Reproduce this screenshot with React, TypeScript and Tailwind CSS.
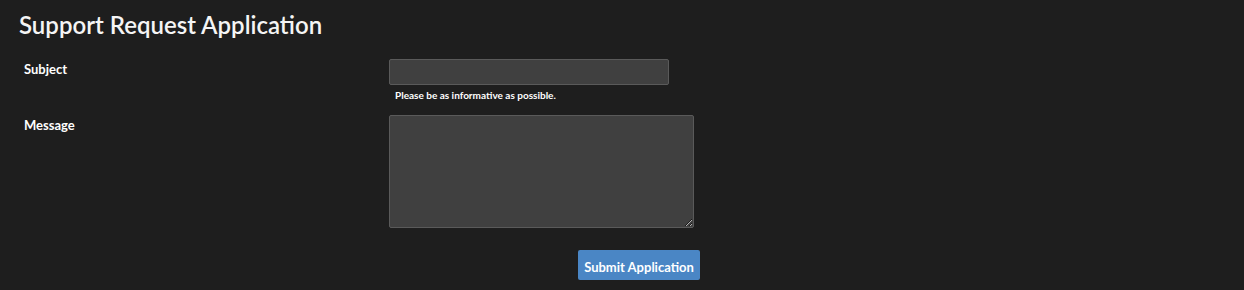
import React from "react";

export default function App() {
  return (
    <div className="w-[1244px] h-[290px] bg-[#1e1e1e] text-white overflow-hidden" style={{ fontFamily: "Lato, 'Open Sans', sans-serif" }}>
      <div className="pl-[19px] pt-[9px]">
        <h1 className="text-[24px] leading-[32px] font-semibold text-[#f5f5f5]">Support Request Application</h1>
      </div>
      <div className="mt-[18px] pl-[24px]">
        <div className="flex">
          <label className="w-[365px] text-[13px] font-bold leading-[16px] pt-[2px]">Subject</label>
          <div className="flex flex-col">
            <input type="text" className="w-[280px] h-[26px] bg-[#404040] border border-[#5a5a5a] rounded-[2px] outline-none" />
            <span className="mt-[3px] ml-[6px] text-[10px] font-bold leading-[14px]">Please be as informative as possible.</span>
          </div>
        </div>
        <div className="flex mt-[13px]">
          <label className="w-[365px] text-[13px] font-bold leading-[16px] pt-[2px]">Message</label>
          <textarea className="w-[305px] h-[113px] bg-[#404040] border border-[#5a5a5a] rounded-[2px] outline-none resize" />
        </div>
        <div className="flex mt-[22px] pl-[554px]">
          <button className="w-[122px] h-[30px] bg-[#4a86c5] rounded-[2px] text-[13px] font-bold text-white pt-[4px] leading-[16px]">Submit Application</button>
        </div>
      </div>
    </div>
  );
}
